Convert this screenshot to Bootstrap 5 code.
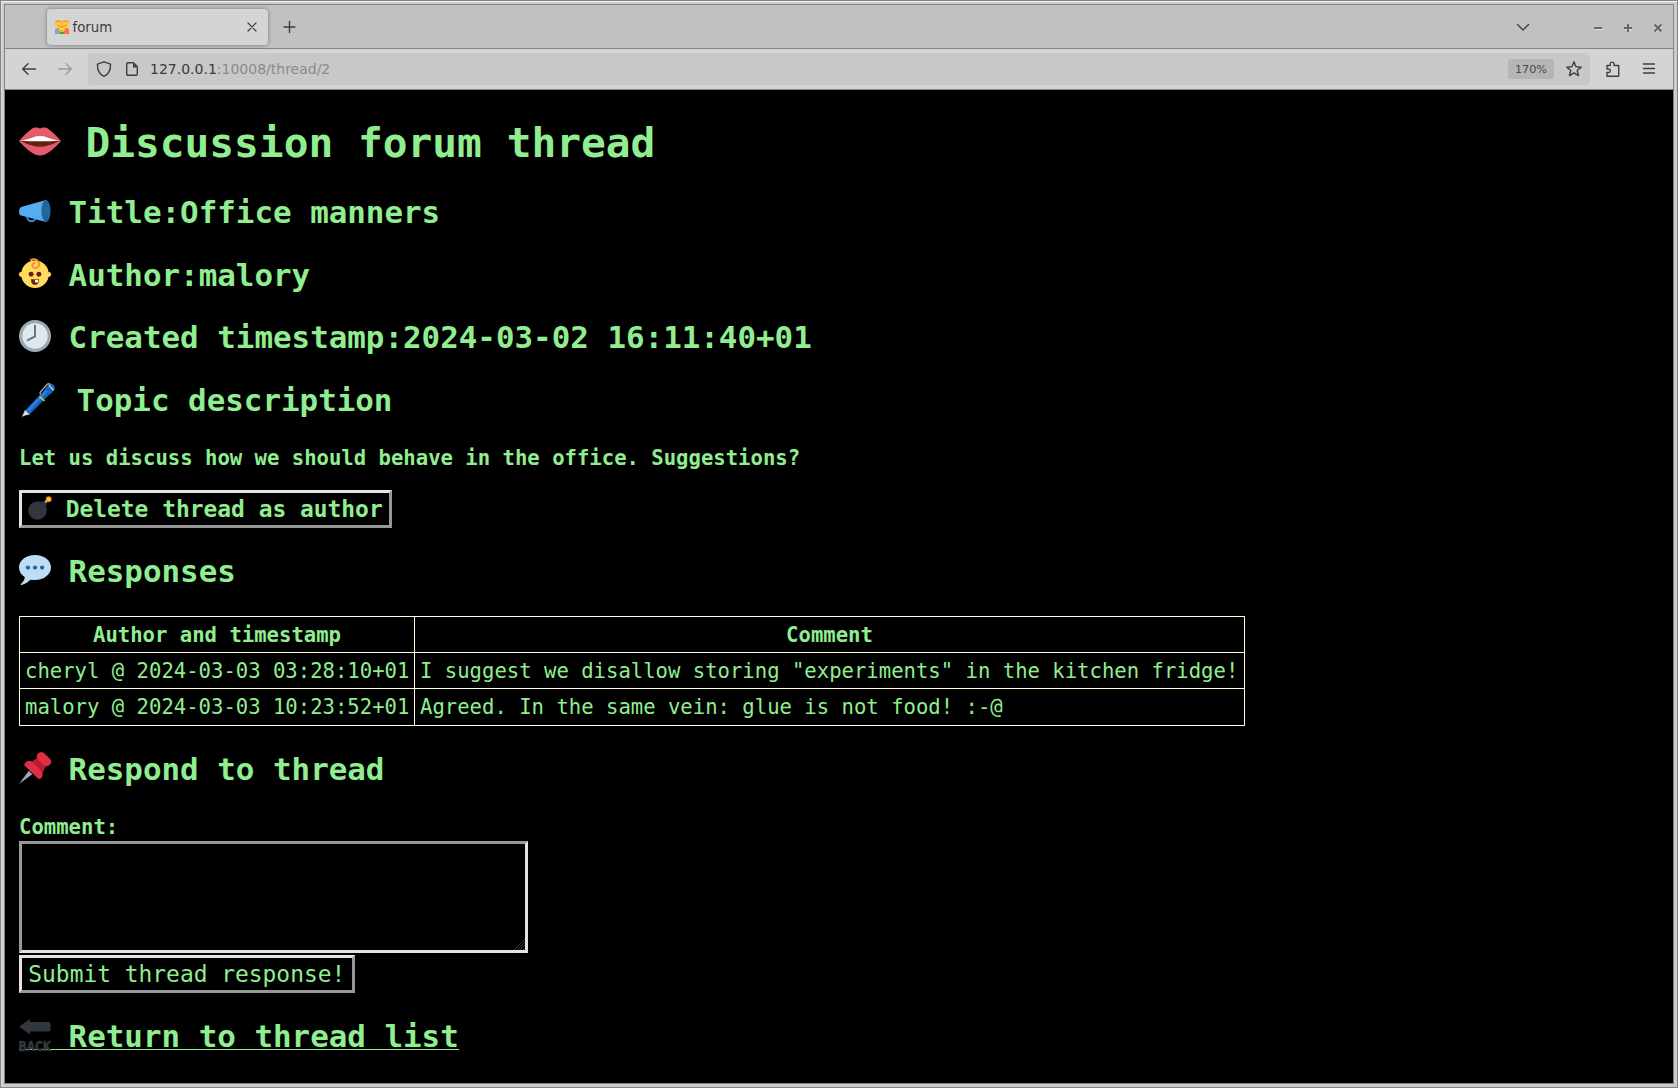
<!DOCTYPE html>
<html lang="en">
<head>
<meta charset="utf-8">
<title>forum</title>
<link rel="stylesheet" href="https://cdn.jsdelivr.net/npm/bootstrap@5.3.0/dist/css/bootstrap.min.css">
<style>
html,body{height:100%;overflow:hidden}
body{font-family:"DejaVu Sans",sans-serif;background:#cdcbcd}
.win{width:1678px;height:1088px;border:1px solid #848284;padding:3px;background:#cdcbcd;box-shadow:inset 0 1px #f4f2f4,inset 1px 0 #dcdadc}
.win-inner{border:1px solid #848484;height:1080px}
.tabstrip{height:44px;background:#c1c1c1;border-bottom:1px solid #848484;padding:4px 14px 0 42px}
.tab-item{width:221px;height:36px;background:#d4d4d4;border-radius:4px;box-shadow:0 0 4px rgba(0,0,0,.4);padding:0 11px 0 8px;font-size:13.33px;color:#3c3c3c}
.tab-item span{padding-top:1px;margin-left:3.5px}
.new-tab{margin:11px 0 0 15px}
.toolbar{height:41px;background:#d4d4d4;border-bottom:1px solid #848484;padding-left:17px;padding-right:18px}
.urlbar{height:32px;width:1502px;background:#c8c8c8;border-radius:4px;padding:0 8px;font-size:14px;color:#3a3a3a;margin-left:16px}
.url-rest{color:#8b8b8b}
.zoom-tag{width:46px;height:20px;border-radius:3px;background:#b5b5b5;font-size:11.2px;line-height:21px;color:#4a4a4a;margin-right:12px}
svg{display:block;flex:none;overflow:visible}
.ln{fill:none;stroke:#3f3f3f;stroke-width:1.4;stroke-linecap:round;stroke-linejoin:round}
.page{height:993px;background:#000;color:#90ee90;font-family:"DejaVu Sans Mono",monospace;font-size:20.6px;line-height:24px;padding:29px 14px 0;white-space:pre}
.page h1,.page h2{font-weight:700;margin:0}
.page h1{font-size:41.17px;line-height:48px;gap:24.8px}
.page h2{font-size:30.87px;line-height:36px;gap:18px;margin-top:27px}
.page h2 svg,.page h1 svg{margin-top:1px;margin-left:-.4px}
.page h2.tight{margin-top:25px}
.page h2.mid{margin-top:26px}
.desc{margin:28px 0 20px;font-weight:700}
.relief{display:flex;height:38px;background:#000;color:#90ee90;font-size:22.9px;line-height:28px;padding:2px 0 0 6.3px;border:3px solid;border-color:#e3e3e3 #989898 #989898 #e3e3e3;border-radius:0}
.del{width:373px;font-weight:700;gap:13.4px}
.del svg{margin-top:1px}
.sub{width:336px;margin-top:2px}
.replies{border-collapse:collapse;margin-top:27px;width:1226px;table-layout:fixed}
.replies th,.replies td{border:1px solid #ffffe0;height:36px;padding:0 5px;line-height:34px}
.replies th{text-align:center}
.replies tr:last-child td{height:37px}
.c1{width:395px}
.lab{font-weight:700;margin-top:28px}
.reply-box{display:block;width:509px;height:112px;margin-top:2px;background:#000;color:#90ee90;border:3px solid;border-color:#989898 #e3e3e3 #e3e3e3 #989898;resize:none;outline:0}
.back-link{color:#90ee90;text-decoration:none;border-bottom:1px solid #90ee90;height:32px;width:440px;gap:18px}
.grip{position:absolute;right:3px;bottom:3px}
</style>
<script src="https://cdn.jsdelivr.net/npm/bootstrap@5.3.0/dist/js/bootstrap.bundle.min.js"></script>
</head>
<body>
<div class="win"><div class="win-inner">
<div class="tabstrip d-flex">
  <div class="tab-item d-flex align-items-center">
    <svg width="14" height="14" viewBox="0 0 14 14"><path d="M0 14V9q3-2 6 0v5z" fill="#8fa5b5"/><path d="M8 14V9q3-2 6 0v5z" fill="#ff7043"/><rect x="5" y="11" width="4" height="3" fill="#5aa02c"/><circle cx="3.500" cy="4.200" r="3.500" fill="#ffc83d"/><circle cx="10.500" cy="4.200" r="3.500" fill="#ffc83d"/><path d="M0 3q0-3 3.500-3T7 3Q3.500 1 0 3M7 3q0-3 3.500-3T14 3Q10.500 1 7 3" fill="#f8a030"/><circle cx="7" cy="9" r="3" fill="#ffce31"/><path d="M4 8.500q1-3 3-3t3 3Q7 7 4 8.500" fill="#f8a030"/><path d="M2 5.500h3M9 5.500h3M6 10.500h2" stroke="#d08a22" stroke-width=".7"/></svg>
    <span>forum</span>
    <svg class="ms-auto" width="10" height="10" viewBox="0 0 10 10"><path class="ln" style="stroke-width:1.200" d="M1 1l8 8M9 1l-8 8"/></svg>
  </div>
  <svg class="new-tab" width="13" height="13" viewBox="0 0 13 13"><path class="ln" d="M6.500 1.500v11M1 7h11"/></svg>
  <div class="d-flex ms-auto pt-2">
    <svg width="155" height="20" viewBox="0 0 155 20"><path class="ln" d="M13.500 7.500l5.500 5.500 5.500-5.500"/><g fill="none" stroke="#f0f0f0" stroke-width="1.600"><path d="M91 12h7M121 12h7M124.500 8.500v7M151 8.500l7 6.500M158 8.500l-7 6.500"/></g><g fill="none" stroke="#666" stroke-width="2"><path d="M90 11h8"/><path d="M120 11h8M124 7v8"/><path d="M150.500 7.500l7 7M157.500 7.500l-7 7"/></g></svg>
  </div>
</div>
<div class="toolbar d-flex align-items-center">
  <svg width="14" height="12" viewBox="0 0 14 12"><path class="ln" d="M13.500 6H.7M6 .7L.7 6 6 11.300"/></svg>
  <svg style="margin-left:22px" width="14" height="12" viewBox="0 0 14 12"><path class="ln" style="stroke:#9b9b9b" d="M.5 6h12.800M8 .7L13.300 6 8 11.300"/></svg>
  <div class="urlbar d-flex align-items-center">
    <svg width="16" height="16" viewBox="0 0 16 16"><path class="ln" d="M8 .8L14.500 3.200C14.800 9 12.500 13.300 8 15.300 3.500 13.300 1.200 9 1.500 3.200z"/></svg>
    <svg style="margin-left:14px" width="12" height="14" viewBox="0 0 12 14"><path class="ln" d="M2 .7h5.500l3.800 3.800V12q0 1.300-1.300 1.300H2Q.7 13.300.7 12V2Q.7.700 2 .7z"/><path d="M7 1v4.500h4.500z" fill="#3f3f3f"/></svg>
    <span style="margin-left:12px">127.0.0.1<span class="url-rest">:10008/thread/2</span></span>
    <span class="zoom-tag text-center ms-auto">170%</span>
    <svg width="16" height="16" viewBox="0 0 16 16"><path class="ln" d="M8 .8l2 4.900 5.200.4-4 3.400 1.300 5.100L8 11.900l-4.500 2.700 1.300-5.100-4-3.400L6 5.700z"/></svg>
  </div>
  <svg style="margin-left:15px" width="16" height="16" viewBox="0 0 16 16"><path class="ln" d="M2 4.500h3.300V3a1.900 1.900 0 0 1 3.800 0v1.500H13.700V15.200H2V11.500h1.600a1.700 1.700 0 0 0 0-3.500H2z"/></svg>
  <svg class="ms-auto" width="12" height="12" viewBox="0 0 12 12"><path class="ln" d="M.5 1h11M.5 5.500h11M.5 10h11"/></svg>
</div>
<main class="page"><h1 class="d-flex"><svg width="42" height="42" viewBox="0 0 36 36"><path fill="#e8596e" d="M0 18Q10 7 13.500 6.500q2.500-.4 4.500.8 2-1.200 4.500-.8Q26 7 36 18 25 30.500 18 30.500T0 18"/><path fill="#662113" d="M1.500 18Q18 14.500 34.500 18 25 23 18 23T1.500 18"/><path fill="#fff" d="M1.500 17.700Q10 16 13 14.600q3-1.200 5-.6 2-.6 5 .6 3 1.400 11.500 3.100-10 .7-16.500.5-6.500.2-16.500-.5"/></svg><span>Discussion forum thread</span></h1><h2 class="d-flex"><svg width="32" height="32" viewBox="0 0 32 32"><circle cx="12.500" cy="22" r="4.300" fill="none" stroke="#3b88c3" stroke-width="2"/><path fill="#55acee" d="M2 12L27 5v22L2 20.500Q0 20 0 16.500T2 12"/><ellipse cx="27" cy="16" rx="4.600" ry="11" fill="#226699"/></svg><span>Title:Office manners</span></h2><h2 class="d-flex"><svg width="32" height="32" viewBox="0 0 36 36"><circle cx="2.700" cy="18.500" r="2.800" fill="#ffdc5d"/><circle cx="33.300" cy="18.500" r="2.800" fill="#ffdc5d"/><circle cx="18" cy="18.300" r="15.500" fill="#ffdc5d"/><path d="M12.500 2.800Q18 0 21 3.300t1 6q-2 3-5 1.500t-1.500-4Q16.500 4.800 18.500 6.300" fill="none" stroke="#f7913b" stroke-width="2.200"/><circle cx="13.600" cy="18.300" r="2.800" fill="#662113"/><circle cx="22.400" cy="18.300" r="2.800" fill="#662113"/><path d="M13.500 24h9Q22.500 30.300 18 30.300t-4.500-6.300" fill="#662113"/><path d="M18 24.500h3.500v3H18z" fill="#fff"/></svg><span>Author:malory</span></h2><h2 class="d-flex mid"><svg width="32" height="32" viewBox="0 0 36 36"><circle cx="18" cy="18" r="18" fill="#99aab5"/><circle cx="18" cy="18" r="14.300" fill="#e1e8ed"/><path d="M18 6.500V18.500L10 22.700" fill="none" stroke="#66757f" stroke-width="2.200" stroke-linecap="round" stroke-linejoin="round"/></svg><span>Created timestamp:2024-03-02 16:11:40+01</span></h2><h2 class="d-flex"><svg width="40" height="34" viewBox="0 0 40 34"><path d="M2.500 34.500l2-4.500 2 2z" fill="#888"/><path d="M5.500 28L27 5.500 32 10 10 32z" fill="#1565c0"/><path d="M8 27L27.500 6.500l1.700 1.500L10 28.500z" fill="#2b7fdb"/><path d="M3.500 33L6 27l4.500 4.500z" fill="#ddd"/><path d="M26 5.500L29.500 1.800Q32-.5 34.500 1.800t.7 5L32 11z" fill="#1565c0"/><path d="M29.800 2.500l5 4.700" stroke="#ccc" stroke-width="1.400"/><path d="M20.500 13.500l5 4.500" stroke="#f2c32c" stroke-width="1.600"/><path d="M21.500 11.500L21 9.500 28 1.500q1.500-1.500 3.500 0" stroke="#a5a5a5" stroke-width="1.300" fill="none"/></svg><span>Topic description</span></h2><p class="desc">Let us discuss how we should behave in the office. Suggestions?</p><button class="relief del" type="button"><svg width="24" height="24" viewBox="0 0 24 24"><circle cx="9.500" cy="14.500" r="9.300" fill="#31373d"/><path d="M13 6l4-1 2 3-2 3z" fill="#31373d"/><path d="M17.500 6.500l2-3" stroke="#ccd6dd" stroke-width="2"/><circle cx="20.700" cy="3.200" r="2.900" fill="#f4900c"/><circle cx="20.700" cy="3.200" r="1.500" fill="#ffcc4d"/></svg><span>Delete thread as author</span></button><h2 class="d-flex tight"><svg width="32" height="32" viewBox="0 0 36 36"><path fill="#bdddf4" d="M18 1C8 1 0 7 0 15c0 5 2.500 8.500 6.500 11Q6.500 30 2 34q-.5 1 1 1Q8 34 13 29q2 .3 5 .3c10 0 18-6 18-14.300S28 1 18 1"/><g fill="#2a6797"><circle cx="10" cy="15.200" r="2.400"/><circle cx="18" cy="15.200" r="2.400"/><circle cx="26" cy="15.200" r="2.400"/></g></svg><span>Responses</span></h2><table class="replies"><colgroup><col class="c1"><col></colgroup><thead><tr><th>Author and timestamp</th><th>Comment</th></tr></thead><tbody><tr><td>cheryl @ 2024-03-03 03:28:10+01</td><td>I suggest we disallow storing "experiments" in the kitchen fridge!</td></tr><tr><td>malory @ 2024-03-03 10:23:52+01</td><td>Agreed. In the same vein: glue is not food! :-@</td></tr></tbody></table><h2 class="d-flex tight"><svg width="32" height="32" viewBox="0 0 36 36"><path fill="#99aab5" d="M0 36L11 21l4 4z"/><path fill="#be1931" d="M14 11L22 5.500 31 15l-5 9-6-4z"/><path fill="#dd2e44" d="M21 2q4-4 8 0l6 6q3 4-1 7-3 2-6 0l-7-7q-2-3 0-6M7 12q3-3.500 7-1.500L25.500 22q2.500 4-.5 7.500-2 1.500-4 0L7 16q-2-2 0-4"/></svg><span>Respond to thread</span></h2><label class="lab d-block" for="reply">Comment:</label><div class="position-relative" style="width:509px"><textarea class="reply-box" id="reply"></textarea><svg class="grip" width="12" height="12" viewBox="0 0 12 12"><path d="M1 12L12 1M4 12l8-8M7 12l5-5M10 12l2-2" stroke="#4a4a4a" stroke-width=".8"/></svg></div><button class="relief sub" type="button">Submit thread response!</button><h2 class="tight"><a class="back-link d-flex" href="#"><svg width="32" height="33" viewBox="0 0 32 33"><path fill="#31373d" d="M0 7.500L11 0v3h18.500Q31.500 3 31.500 5v5.500q0 2-2 2H11v3z"/><text x="-.5" y="32" textLength="32.500" lengthAdjust="spacingAndGlyphs" font-family="DejaVu Sans" font-weight="700" font-size="13.300" fill="#31373d" stroke="#31373d" stroke-width=".5">BACK</text></svg><span>Return to thread list</span></a></h2></main>
</div></div>
</body>
</html>
